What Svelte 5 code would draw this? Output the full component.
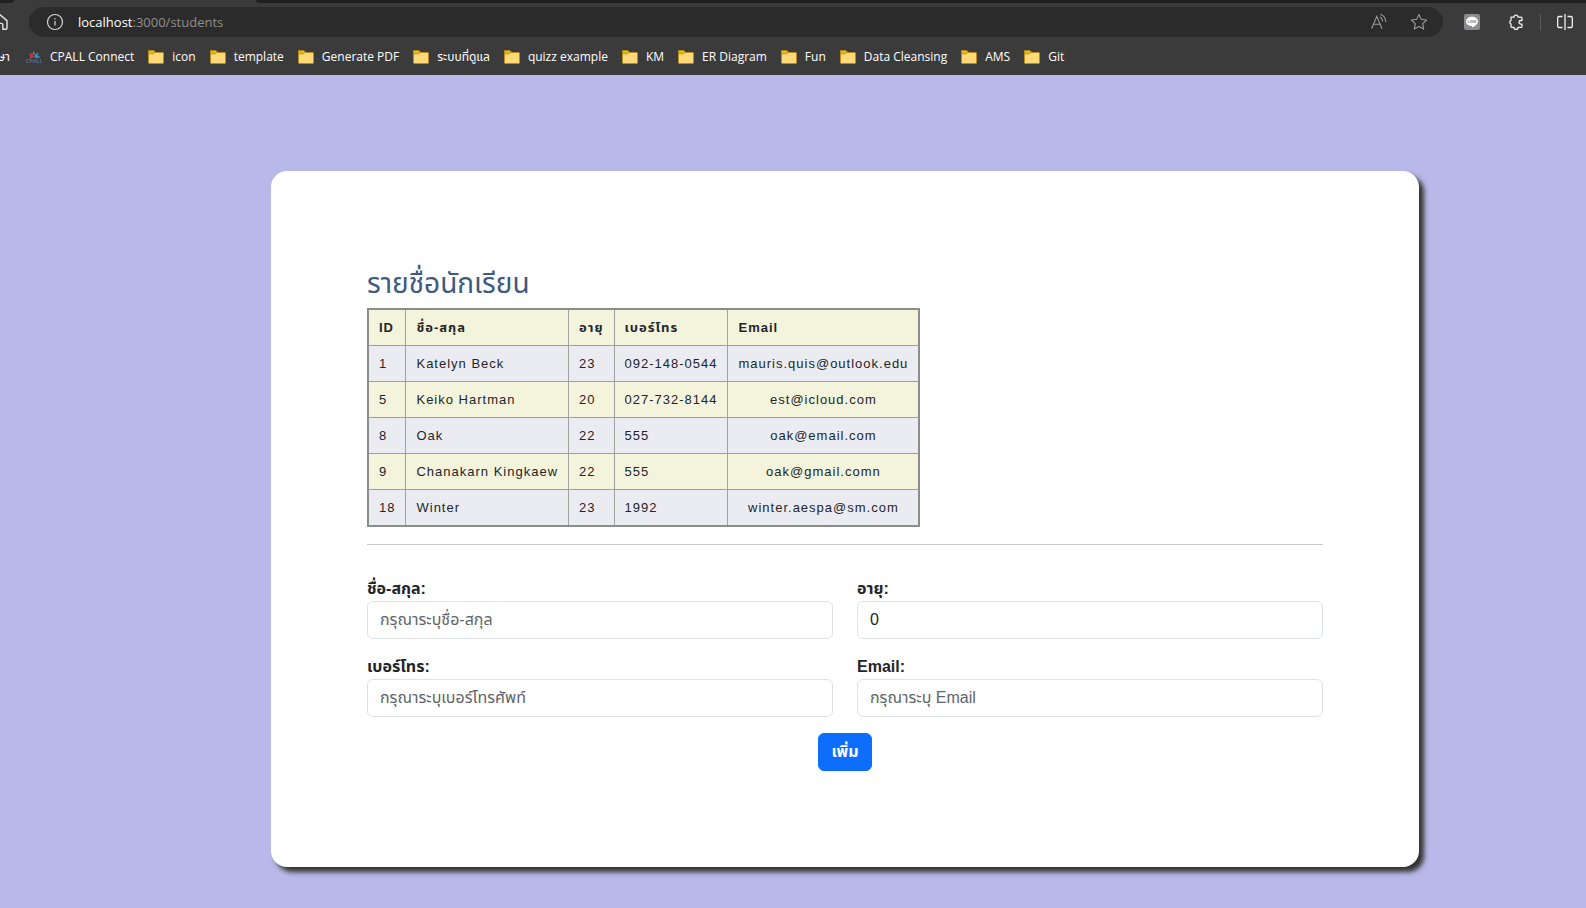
<script>
  const folders = ['icon', 'template', 'Generate PDF', 'ระบบที่ดูแล', 'quizz example', 'KM', 'ER Diagram', 'Fun', 'Data Cleansing', 'AMS', 'Git'];

  const columns = ['ID', 'ชื่อ-สกุล', 'อายุ', 'เบอร์โทร', 'Email'];

  const students = [
    { id: 1, name: 'Katelyn Beck', age: 23, phone: '092-148-0544', email: 'mauris.quis@outlook.edu' },
    { id: 5, name: 'Keiko Hartman', age: 20, phone: '027-732-8144', email: 'est@icloud.com' },
    { id: 8, name: 'Oak', age: 22, phone: '555', email: 'oak@email.com' },
    { id: 9, name: 'Chanakarn Kingkaew', age: 22, phone: '555', email: 'oak@gmail.comn' },
    { id: 18, name: 'Winter', age: 23, phone: '1992', email: 'winter.aespa@sm.com' }
  ];

  let name = $state('');
  let age = $state('0');
  let phone = $state('');
  let email = $state('');
</script>

<header class="browser">
  <div class="tabs"><span class="tab-before"></span><span class="tab-active"></span><span class="tab-after"></span></div>

  <div class="toolbar">
    <button class="home" aria-label="Home">
      <svg width="18" height="18" viewBox="0 0 18 18" fill="none" stroke="#e4e4e4" stroke-width="1.4" stroke-linejoin="round">
        <path d="M2 7.6 9 1.8l7 5.8v7.6a1 1 0 0 1-1 1h-3.2v-4.4a1.4 1.4 0 0 0-1.4-1.4H7.6a1.4 1.4 0 0 0-1.4 1.4v4.4H3a1 1 0 0 1-1-1z" />
      </svg>
    </button>

    <div class="address">
      <svg width="18" height="18" viewBox="0 0 18 18" fill="none" stroke="#d6d6d6" stroke-width="1.2">
        <circle cx="9" cy="9" r="7.5" />
        <path d="M9 8v4.6" /><path d="M9 5.2v1.4" />
      </svg>
      <p class="url"><span>localhost</span>:3000/students</p>
      <button aria-label="Read aloud">
        <svg width="18" height="18" viewBox="0 0 18 18" fill="none" stroke="#9a9a9a" stroke-width="1.1" stroke-linecap="round">
          <path d="M1.8 15.2 6.8 3.4l5 11.8M3.500 11.2h6.600M10.400 4.200q2 1.200 2.100 3.800M10.800 1.400q4.800 2 4.900 7.200" />
        </svg>
      </button>
      <button aria-label="Add to favorites">
        <svg width="18" height="18" viewBox="0 0 18 18" fill="none" stroke="#9a9a9a" stroke-width="1.1" stroke-linejoin="round">
          <path d="m9 1.400 2.300 4.900 5.300.7-3.900 3.700 1 5.400L9 13.500l-4.700 2.600 1-5.400L1.400 7l5.300-.7z" />
        </svg>
      </button>
    </div>

    <div class="extensions">
      <button aria-label="LINE">
        <svg width="16" height="16" viewBox="0 0 16 16">
          <rect width="16" height="16" rx="2" fill="#8c8c8c" />
          <path d="M8 2.800c3.300 0 6 2 6 4.600 0 2.200-2 3.900-5.300 5.800-.7.400-.8.100-.7-1.200-3.300 0-6-2-6-4.600s2.700-4.600 6-4.600z" fill="#fff" />
          <text x="8" y="8.700" text-anchor="middle" font-size="4" font-weight="700" fill="#8c8c8c">LINE</text>
        </svg>
      </button>
      <button aria-label="Extensions">
        <svg width="18" height="18" viewBox="0 0 18 18" fill="none" stroke="#f0f0f0" stroke-width="1.3" stroke-linejoin="round">
          <path d="M4 4.200h3a2 2 0 0 1 4 0h3a1 1 0 0 1 1 1v2.300h-1.200a1.800 1.800 0 0 0 0 3.600H15v2.300a1 1 0 0 1-1 1h-3a2 2 0 0 1-4 0H5a1 1 0 0 1-1-1v-2.400a2 2 0 0 1 0-3.600z" />
        </svg>
      </button>
      <span class="divider"></span>
      <button aria-label="Split screen">
        <svg width="18" height="18" viewBox="0 0 18 18" fill="none" stroke="#f0f0f0" stroke-width="1.3">
          <path d="M6.500 3.500H3a1.300 1.300 0 0 0-1.300 1.300v8.400A1.300 1.300 0 0 0 3 14.500h3.500M11.500 3.500H15a1.300 1.300 0 0 1 1.300 1.300v8.400a1.300 1.300 0 0 1-1.300 1.300h-3.500M9 1v16" />
        </svg>
      </button>
    </div>
  </div>

  <nav class="bookmarks" aria-label="Bookmarks">
    <a class="cut" href="#top">ษา</a>
    <a href="#cpall">
      <svg width="16" height="16" viewBox="0 0 16 16">
        <path d="m7.500 2 1.600 3-2.600.5z" fill="#5aa05a" />
        <path d="m3.200 4 3.600 1 .8 3.400-4.400 1.200 1-2.700z" fill="#c2384a" />
        <path d="m9 5.200 4-1.400-1.400 2.600 3 2.200-4.600.6-2-1.600z" fill="#3291b5" />
        <text x="8" y="14.400" text-anchor="middle" font-size="5.500" font-weight="700" fill="#566a91">CPALL</text>
      </svg>
      CPALL Connect
    </a>
    {#each folders as folder}
      <a href="#{folder}">
        <svg width="16" height="16" viewBox="0 0 16 16">
          <path d="M.5 2h5.700l1.300 1.500h7.200a.8.800 0 0 1 .8.800v9.400a.8.800 0 0 1-.8.800H1.300a.8.800 0 0 1-.8-.8z" fill="#ffd977" stroke="#b78a1c" />
          <path d="M.5 1.500h5.300l1.300 1.300-1.600 2H.5z" fill="#e5b522" stroke="#b08a10" stroke-width=".8" />
        </svg>
        {folder}
      </a>
    {/each}
  </nav>
</header>

<main>
  <section class="card">
    <h1>รายชื่อนักเรียน</h1>

    <table>
      <thead>
        <tr>
          {#each columns as column}<th scope="col">{column}</th>{/each}
        </tr>
      </thead>
      <tbody>
        {#each students as student}
          <tr>
            <td>{student.id}</td>
            <td>{student.name}</td>
            <td>{student.age}</td>
            <td>{student.phone}</td>
            <td class="email">{student.email}</td>
          </tr>
        {/each}
      </tbody>
    </table>

    <hr />

    <form onsubmit={(event) => event.preventDefault()}>
      <div class="field">
        <label for="name">ชื่อ-สกุล:</label>
        <input id="name" type="text" placeholder="กรุณาระบุชื่อ-สกุล" bind:value={name} />
      </div>
      <div class="field">
        <label for="age">อายุ:</label>
        <input id="age" type="text" inputmode="numeric" bind:value={age} />
      </div>
      <div class="field">
        <label for="phone">เบอร์โทร:</label>
        <input id="phone" type="text" placeholder="กรุณาระบุเบอร์โทรศัพท์" bind:value={phone} />
      </div>
      <div class="field">
        <label for="email">Email:</label>
        <input id="email" type="text" placeholder="กรุณาระบุ Email" bind:value={email} />
      </div>
      <button class="submit" type="submit">เพิ่ม</button>
    </form>
  </section>
</main>

<style>
  :global(body) {
    background: #b9b9e9;
    color: #212529;
    font-family: 'Liberation Sans', 'Noto Sans Thai', sans-serif;
    font-size: 16px;
    line-height: 24px;
    overflow: hidden;
  }

  .browser {
    background: #3b3b3b;
    color: #fff;
    font-family: 'Open Sans', 'Noto Sans', 'Noto Sans Thai', sans-serif;
    height: 75px;
  }

  .browser button {
    background: none;
    border: 0;
    padding: 0;
    display: flex;
  }

  .browser svg {
    flex: none;
    display: block;
  }

  .tabs {
    display: flex;
    height: 3px;
  }

  .tab-before {
    width: 14px;
    background: #202020;
    border-bottom-right-radius: 3px;
  }

  .tab-active {
    width: 242px;
  }

  .tab-after {
    flex: 1;
    background: #202020;
    border-bottom-left-radius: 3px;
  }

  .toolbar {
    display: flex;
    align-items: center;
    padding: 4px 12px 4px 0;
  }

  .browser .home {
    width: 9px;
    margin-right: 20px;
    overflow: hidden;
    justify-content: flex-end;
  }

  .address {
    flex: 1;
    display: flex;
    align-items: center;
    gap: 22px;
    height: 30px;
    box-sizing: border-box;
    padding: 0 15px 0 17px;
    border-radius: 15px;
    background: #2b2b2b;
  }

  .url {
    flex: 1;
    margin: 0 0 0 -8px;
    font-size: 13px;
    line-height: 18px;
    color: #8f8f8f;
  }

  .url span {
    color: #fff;
  }

  .extensions {
    display: flex;
    align-items: center;
    gap: 15px;
    margin-left: 21px;
  }

  .extensions button:first-child {
    margin-right: 12px;
  }

  .divider {
    width: 1px;
    height: 16px;
    background: #5c5c5c;
  }

  .bookmarks {
    display: flex;
    align-items: center;
    gap: 14px;
    padding-top: 7px;
    font-size: 12px;
    line-height: 18px;
    white-space: nowrap;
  }

  .bookmarks a {
    display: flex;
    align-items: center;
    gap: 8px;
    color: #fff;
    text-decoration: none;
  }

  .bookmarks .cut {
    width: 10px;
    margin-right: 2px;
    overflow: hidden;
    justify-content: flex-end;
  }

  main {
    padding: 96px 167px 41px 271px;
  }

  .card {
    padding: 96px;
    border-radius: 16px;
    background: #fff;
    box-shadow: 5px 5px 5px #333;
  }

  h1 {
    margin: 0 0 8px;
    font-size: 28px;
    font-weight: 400;
    line-height: 33px;
    color: #3d5a80;
  }

  table {
    border-collapse: collapse;
    border: 2px solid #8c8c8c;
    font-size: 13px;
    line-height: 19px;
    letter-spacing: 1px;
  }

  th,
  td {
    padding: 8px 10px;
    border: 1px solid #a0a0a0;
    text-align: left;
  }

  th,
  tbody tr:nth-child(even) td {
    background: #f4f4dc;
  }

  td {
    background: #ebecf1;
  }

  td.email {
    text-align: center;
  }

  hr {
    margin: 17px 0 32px;
    border: 0;
    border-top: 1px solid #c7c8c9;
  }

  form {
    display: grid;
    grid-template-columns: 1fr 1fr;
    gap: 16px 24px;
  }

  label {
    display: block;
    font-weight: 700;
  }

  input {
    display: block;
    box-sizing: border-box;
    width: 100%;
    height: 38px;
    padding: 6px 12px;
    border: 1px solid #dee2e6;
    border-radius: 6px;
    background: #fff;
    color: #212529;
    font: inherit;
  }

  input::placeholder {
    color: #5f656a;
    opacity: 1;
  }

  .submit {
    grid-column: 1 / -1;
    justify-self: center;
    padding: 6px 12px;
    border: 1px solid #0d6efd;
    border-radius: 6px;
    background: #0d6efd;
    color: #fff;
    font: inherit;
    font-weight: 700;
  }
</style>
